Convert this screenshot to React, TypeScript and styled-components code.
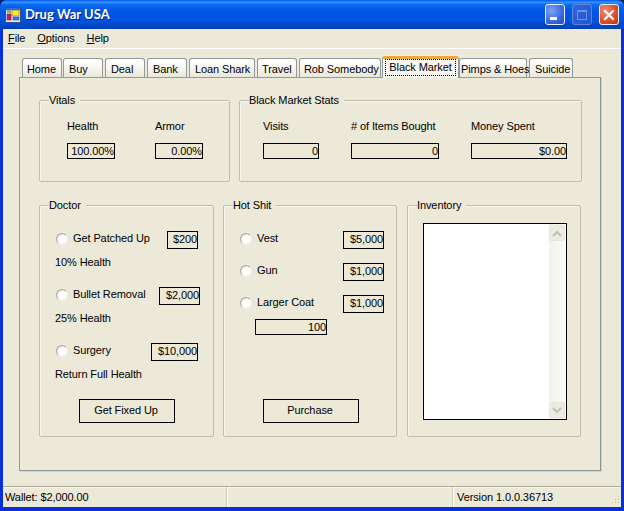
import styled, { createGlobalStyle } from 'styled-components';

const GlobalStyle = createGlobalStyle`
  html, body {
    margin: 0;
    padding: 0;
    background: #0a246a;
  }
  * {
    box-sizing: border-box;
  }
`;

const Window = styled.div`
  width: 624px;
  height: 511px;
  display: flex;
  flex-direction: column;
  padding: 0 3px 4px;
  background: #0831d9;
  border-radius: 7px 7px 0 0;
  font-family: 'Liberation Sans', Arial, sans-serif;
  font-size: 11px;
  line-height: 13px;
  letter-spacing: -0.1px;
  color: #000;
  overflow: hidden;
`;
const TitleBar = styled.header`
  flex: none;
  height: 29px;
  margin: 0 -3px;
  padding: 0 5px;
  display: flex;
  align-items: center;
  gap: 4px;
  background: linear-gradient(
    180deg,
    #0058ee 0%,
    #3593ff 8%,
    #0a6af0 16%,
    #0055e5 40%,
    #0053e0 70%,
    #0048c8 88%,
    #003dae 100%
  );
`;
const TitleText = styled.h1`
  flex: 1;
  margin: 0;
  font-family: Lato, sans-serif;
  font-size: 13px;
  font-weight: 700;
  letter-spacing: 0;
  color: #fff;
  text-shadow: 1px 1px 0 #0a1f80;
`;
const WindowButton = styled.button<{ $tone: 'blue' | 'faded' | 'red'; $gap?: number }>`
  width: 20px;
  height: 21px;
  margin-left: ${({ $gap }) => $gap ?? 0}px;
  padding: 0;
  display: flex;
  align-items: center;
  justify-content: center;
  border: 1px solid ${({ $tone }) => ($tone === 'faded' ? '#5f83dd' : '#e8eefc')};
  border-radius: 3px;
  background: ${({ $tone }) =>
    $tone === 'red'
      ? 'radial-gradient(circle at 30% 30%, #ee8f70, #dc4c26 60%, #c03410)'
      : $tone === 'faded'
        ? 'linear-gradient(135deg, #2f68e0, #2155cc)'
        : 'radial-gradient(circle at 30% 30%, #7ea2f2, #3a68e0 60%, #1e46c4)'};
`;
const Body = styled.div`
  flex: 1;
  min-height: 0;
  display: flex;
  flex-direction: column;
  background: #ece9d8;
`;
const MenuBar = styled.nav`
  flex: none;
  height: 20px;
  padding: 3px 0 0 5px;
  display: flex;
  gap: 12px;
  border-bottom: 1px solid #fff;
`;
const MenuItem = styled.span`
  u {
    text-decoration: underline;
  }
`;
const TabArea = styled.div`
  flex: 1;
  min-height: 0;
  padding: 9px 20px 16px 16px;
  display: flex;
  flex-direction: column;
`;
const TabStrip = styled.div`
  flex: none;
  height: 19px;
  padding-left: 3px;
  display: flex;
  align-items: flex-end;
  position: relative;
  z-index: 1;
`;
const Tab = styled.div<{ $w: number; $gap: number; $pad: number }>`
  flex: none;
  width: ${({ $w }) => $w}px;
  margin-right: ${({ $gap }) => $gap}px;
  height: 19px;
  padding: 4px 0 0 ${({ $pad }) => $pad}px;
  white-space: nowrap;
  border: 1px solid #919b9c;
  border-bottom: none;
  border-radius: 3px 3px 0 0;
  background: linear-gradient(180deg, #fff 0%, #f7f6ef 50%, #e9e7da 100%);
`;
const ActiveTab = styled.div<{ $w: number }>`
  flex: none;
  width: ${({ $w }) => $w}px;
  height: 22px;
  margin-bottom: -1px;
  padding: 0 2px;
  border: 1px solid #919b9c;
  border-top: 3px solid #f2a73c;
  border-bottom: none;
  border-radius: 3px 3px 0 0;
  background: #f8f7f0;
`;
const FocusText = styled.span`
  display: block;
  height: 17px;
  padding-top: 1px;
  text-align: center;
  border: 1px dotted #000;
`;
const TabPanel = styled.main`
  flex: none;
  height: 394px;
  padding: 22px 19px 0 19px;
  display: flex;
  flex-direction: column;
  gap: 23px;
  border: 1px solid #919b9c;
  border-right-color: #8b9495;
  box-shadow: 1px 1px 0 #d5d2c0;
  background: #ece9d8;
`;
const GroupRow = styled.div`
  display: flex;
`;
const Group = styled.section<{ $w: number; $h: number; $gap?: number }>`
  position: relative;
  flex: none;
  width: ${({ $w }) => $w}px;
  height: ${({ $h }) => $h}px;
  margin-right: ${({ $gap }) => $gap ?? 0}px;
  border: 1px solid #c0bdaa;
  border-radius: 2px;
  box-shadow: inset 1px 1px 0 #f6f5ee;
`;
const Legend = styled.h2`
  position: absolute;
  top: -7px;
  left: 9px;
  margin: 0;
  padding: 0 5px 0 0;
  font-size: 11px;
  font-weight: 400;
  line-height: 13px;
  background: #ece9d8;
`;
const StatGrid = styled.div<{ $cols: string; $left: number }>`
  padding: 19px 0 0 ${({ $left }) => $left}px;
  display: grid;
  grid-template-columns: ${({ $cols }) => $cols};
  row-gap: 10px;
  justify-items: start;
`;
const Field = styled.div<{ $w: number; $h?: number; $right?: number }>`
  flex: none;
  width: ${({ $w }) => $w}px;
  height: ${({ $h }) => $h ?? 16}px;
  margin-right: ${({ $right }) => $right ?? 0}px;
  padding-top: 1px;
  border: 1px solid #000;
  text-align: right;
  overflow: hidden;
  white-space: nowrap;
`;
const OptionList = styled.div<{ $top: number }>`
  padding: ${({ $top }) => $top}px 0 0;
  display: flex;
  flex-direction: column;
`;
const OptionRow = styled.label<{ $mt?: number }>`
  height: 18px;
  margin-top: ${({ $mt }) => $mt ?? 0}px;
  display: flex;
  align-items: center;
  padding-left: 16px;
  gap: 5px;
`;
const OptionLabel = styled.span`
  flex: 1;
  padding-bottom: 3px;
`;
const Radio = styled.input.attrs({ type: 'radio' })`
  appearance: none;
  flex: none;
  width: 12px;
  height: 12px;
  margin: 0 0 3px;
  border-radius: 50%;
  border: 1px solid #a9a79a;
  border-right-color: #efeee2;
  border-bottom-color: #efeee2;
  background: radial-gradient(circle at 62% 66%, #fff 0 50%, #dedccd 85%);
`;
const Note = styled.p<{ $mb?: number }>`
  margin: 7px 0 ${({ $mb }) => $mb ?? 18}px;
  padding-left: 15px;
`;
const CountField = styled(Field)`
  margin: 6px 0 0 31px;
`;
const ActionButton = styled.button<{ $left: number; $mt: number }>`
  width: 96px;
  height: 24px;
  margin: ${({ $mt }) => $mt}px 0 0 ${({ $left }) => $left}px;
  padding: 0 2px 2px 0;
  border: 1px solid #000;
  background: #ece9d8;
  font: inherit;
  letter-spacing: inherit;
  color: #000;
`;
const ListBox = styled.div`
  width: 144px;
  height: 197px;
  margin: 17px 0 0 15px;
  display: flex;
  justify-content: flex-end;
  border: 1px solid #000;
  background: #fff;
`;
const ScrollBar = styled.div`
  width: 17px;
  padding: 1px 0;
  display: flex;
  flex-direction: column;
  justify-content: space-between;
  background: linear-gradient(90deg, #f3f3ec 0%, #fbfbf8 100%);
`;
const ScrollButton = styled.div`
  width: 16px;
  height: 16px;
  display: flex;
  align-items: center;
  justify-content: center;
  border: 1px solid #e8e6da;
  border-radius: 2px;
  background: #ecebe0;
`;
const StatusBar = styled.footer`
  flex: none;
  height: 21px;
  display: grid;
  grid-template-columns: 223px 226px 1fr;
  border-top: 1px solid #aca899;
  box-shadow: inset 0 1px 0 #f8f7f0;
  position: relative;
`;
const StatusCell = styled.div<{ $left: number }>`
  padding: 4px 0 0 ${({ $left }) => $left}px;
  & + & {
    border-left: 1px solid #cfccb9;
    box-shadow: inset 1px 0 0 #fff;
  }
`;
const Grip = styled.svg`
  position: absolute;
  right: 1px;
  bottom: 1px;
`;

const TABS = [
  { label: 'Home', w: 40, gap: 1, pad: 4 },
  { label: 'Buy', w: 40, gap: 2, pad: 5 },
  { label: 'Deal', w: 40, gap: 2, pad: 5 },
  { label: 'Bank', w: 40, gap: 2, pad: 5 },
  { label: 'Loan Shark', w: 66, gap: 2, pad: 5 },
  { label: 'Travel', w: 40, gap: 2, pad: 4 },
  { label: 'Rob Somebody', w: 82, gap: 1, pad: 4 },
];
const TABS_AFTER = [
  { label: 'Pimps & Hoes', w: 68, gap: 2, pad: 1 },
  { label: 'Suicide', w: 44, gap: 0, pad: 5 },
];

const AppIcon = () => (
  <svg width="16" height="16" viewBox="0 0 16 16">
    <rect x="0.5" y="0.5" width="15" height="15" fill="#dfe3ea" stroke="#3a4f90" />
    <rect x="1" y="1" width="14" height="2" fill="#2d6be0" />
    <rect x="2" y="7" width="4" height="6" fill="#d4145a" stroke="#6a2040" strokeWidth="0.5" />
    <rect x="7" y="3" width="7" height="6" fill="#f7e928" stroke="#555" strokeWidth="0.5" />
    <rect x="2" y="3" width="4" height="3" fill="#7fae86" />
    <rect x="8" y="10" width="6" height="3" fill="#2f7fe0" stroke="#24458c" strokeWidth="0.5" />
  </svg>
);

const ArrowIcon = ({ up }: { up?: boolean }) => (
  <svg width="10" height="7" viewBox="0 0 10 7">
    <path
      d={up ? 'M1 6 L5 2 L9 6' : 'M1 1 L5 5 L9 1'}
      fill="none"
      stroke="#c3c2b6"
      strokeWidth="2"
    />
  </svg>
);

export default function App() {
  return (
    <Window>
      <GlobalStyle />
      <TitleBar>
        <AppIcon />
        <TitleText>Drug War USA</TitleText>
        <WindowButton $tone="blue">
          <svg width="14" height="14" viewBox="0 0 14 14">
            <rect x="2" y="9" width="7" height="3" fill="#fff" />
          </svg>
        </WindowButton>
        <WindowButton $tone="faded" $gap={3}>
          <svg width="14" height="14" viewBox="0 0 14 14">
            <rect x="2.5" y="2.5" width="9" height="9" fill="none" stroke="#6f90e6" />
            <rect x="2" y="2" width="10" height="2" fill="#6f90e6" />
          </svg>
        </WindowButton>
        <WindowButton $tone="red" $gap={3}>
          <svg width="14" height="14" viewBox="0 0 14 14">
            <path d="M3 3 L11 11 M11 3 L3 11" stroke="#fff" strokeWidth="2.2" strokeLinecap="square" />
          </svg>
        </WindowButton>
      </TitleBar>
      <Body>
        <MenuBar>
          <MenuItem><u>F</u>ile</MenuItem>
          <MenuItem><u>O</u>ptions</MenuItem>
          <MenuItem><u>H</u>elp</MenuItem>
        </MenuBar>
        <TabArea>
          <TabStrip>
            {TABS.map((tab) => (
              <Tab key={tab.label} $w={tab.w} $gap={tab.gap} $pad={tab.pad}>{tab.label}</Tab>
            ))}
            <ActiveTab $w={77}>
              <FocusText>Black Market</FocusText>
            </ActiveTab>
            {TABS_AFTER.map((tab) => (
              <Tab key={tab.label} $w={tab.w} $gap={tab.gap} $pad={tab.pad}>{tab.label}</Tab>
            ))}
          </TabStrip>
          <TabPanel>
            <GroupRow>
              <Group $w={191} $h={82} $gap={9}>
                <Legend>Vitals</Legend>
                <StatGrid $cols="88px 60px" $left={27}>
                  <span>Health</span>
                  <span>Armor</span>
                  <Field $w={48}>100.00%</Field>
                  <Field $w={48}>0.00%</Field>
                </StatGrid>
              </Group>
              <Group $w={343} $h={82}>
                <Legend>Black Market Stats</Legend>
                <StatGrid $cols="88px 120px 100px" $left={23}>
                  <span>Visits</span>
                  <span># of Items Bought</span>
                  <span>Money Spent</span>
                  <Field $w={56}>0</Field>
                  <Field $w={88}>0</Field>
                  <Field $w={96}>$0.00</Field>
                </StatGrid>
              </Group>
            </GroupRow>
            <GroupRow>
              <Group $w={175} $h={232} $gap={9}>
                <Legend>Doctor</Legend>
                <OptionList $top={25}>
                  <OptionRow>
                    <Radio name="doctor" />
                    <OptionLabel>Get Patched Up</OptionLabel>
                    <Field $w={31} $h={18} $right={15}>$200</Field>
                  </OptionRow>
                  <Note>10% Health</Note>
                  <OptionRow>
                    <Radio name="doctor" />
                    <OptionLabel>Bullet Removal</OptionLabel>
                    <Field $w={41} $h={18} $right={13}>$2,000</Field>
                  </OptionRow>
                  <Note>25% Health</Note>
                  <OptionRow>
                    <Radio name="doctor" />
                    <OptionLabel>Surgery</OptionLabel>
                    <Field $w={47} $h={18} $right={15}>$10,000</Field>
                  </OptionRow>
                  <Note $mb={0}>Return Full Health</Note>
                  <ActionButton $left={39} $mt={18}>Get Fixed Up</ActionButton>
                </OptionList>
              </Group>
              <Group $w={174} $h={232} $gap={10}>
                <Legend>Hot Shit</Legend>
                <OptionList $top={25}>
                  <OptionRow>
                    <Radio name="hot" />
                    <OptionLabel>Vest</OptionLabel>
                    <Field $w={41} $h={18} $right={12}>$5,000</Field>
                  </OptionRow>
                  <OptionRow $mt={14}>
                    <Radio name="hot" />
                    <OptionLabel>Gun</OptionLabel>
                    <Field $w={41} $h={18} $right={12}>$1,000</Field>
                  </OptionRow>
                  <OptionRow $mt={14}>
                    <Radio name="hot" />
                    <OptionLabel>Larger Coat</OptionLabel>
                    <Field $w={41} $h={18} $right={12}>$1,000</Field>
                  </OptionRow>
                  <CountField $w={72}>100</CountField>
                  <ActionButton $left={39} $mt={64}>Purchase</ActionButton>
                </OptionList>
              </Group>
              <Group $w={174} $h={232}>
                <Legend>Inventory</Legend>
                <ListBox>
                  <ScrollBar>
                    <ScrollButton><ArrowIcon up /></ScrollButton>
                    <ScrollButton><ArrowIcon /></ScrollButton>
                  </ScrollBar>
                </ListBox>
              </Group>
            </GroupRow>
          </TabPanel>
        </TabArea>
        <StatusBar>
          <StatusCell $left={2}>Wallet: $2,000.00</StatusCell>
          <StatusCell $left={0} />
          <StatusCell $left={4}>Version 1.0.0.36713</StatusCell>
          <Grip width="12" height="12" viewBox="0 0 12 12">
            <path
              d="M10 2h1v1h-1z M7 5h1v1H7z M10 5h1v1h-1z M4 8h1v1H4z M7 8h1v1H7z M10 8h1v1h-1z"
              fill="#bdb9a5"
            />
          </Grip>
        </StatusBar>
      </Body>
    </Window>
  );
}
